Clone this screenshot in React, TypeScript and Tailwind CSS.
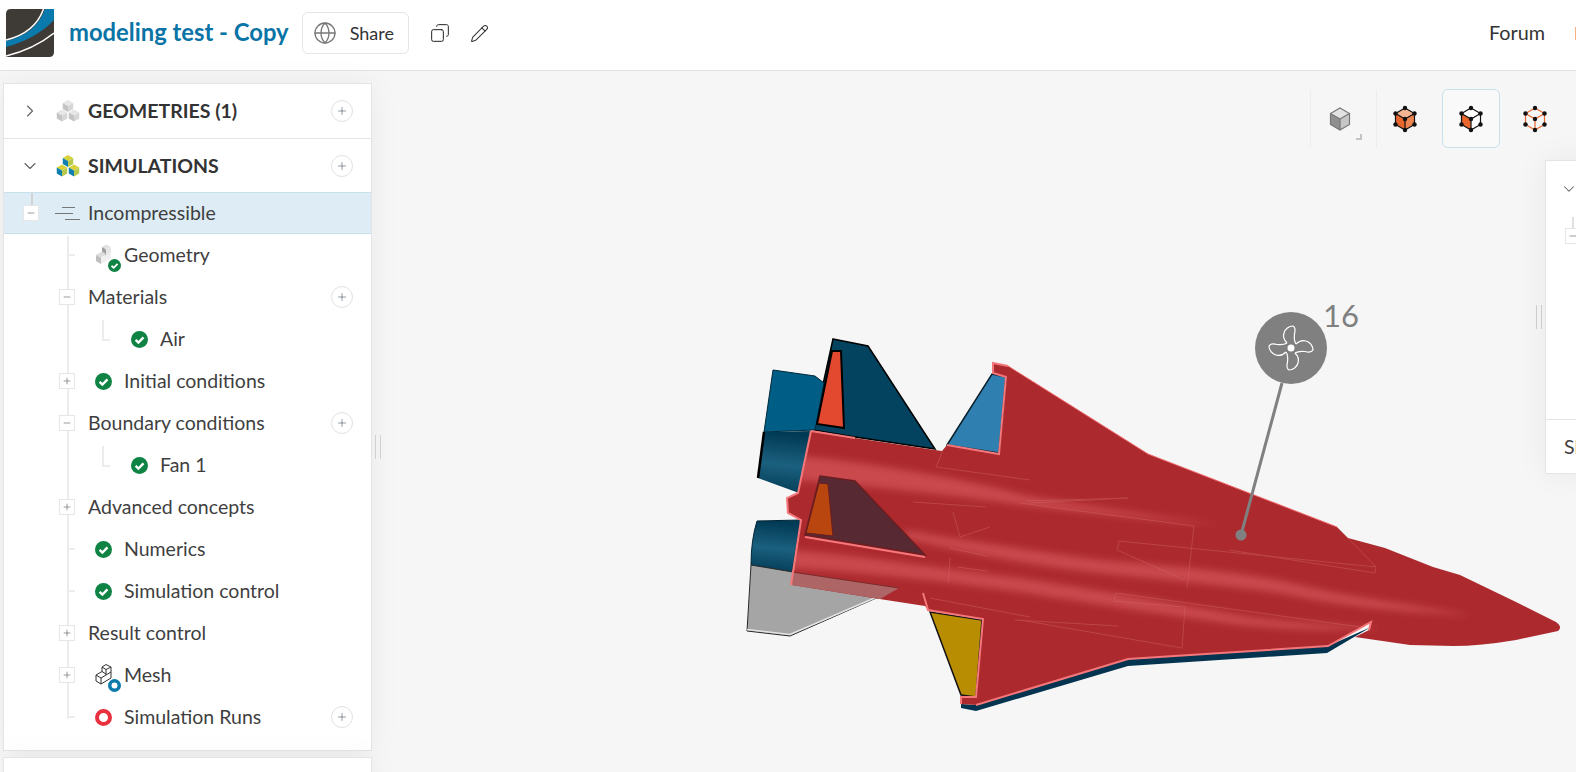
import { ChevronDown, ChevronRight, Copy, Globe, Pencil, Plus, Minus } from 'lucide-react'
import type { ReactNode } from 'react'

const BODY =
  'M811,431 L855,438 L935,450 L942,451 L947,445 L999,454 L1006,377 L993,373 L993,363 L1008,366 L1148,454 L1337,527 L1348,538 L1385,548 L1433,567 L1460,575 L1516,602 L1556,622 Q1563,627 1558,631 L1516,640 Q1480,646 1453,646 L1410,645 L1355,637 L1369,630 L1371,622 L1328,646 L1128,659 L976,705 L961,704 L961,697 L976,697 L983,619 L928,610 L925,606 L873,598 L792,585 L801,520 L788,513 L787,498 L798,493 Z'

const STREAKS = [
  'M795,455 C860,462 950,475 1023,495 C1080,505 1150,515 1220,525 C1150,520 1080,512 1023,505 C950,495 860,485 795,480 Z',
  'M905,530 C960,540 1030,550 1100,560 C1170,566 1250,572 1300,585 C1350,598 1420,605 1470,615 C1400,612 1340,606 1290,595 C1230,585 1160,580 1090,572 C1030,565 960,552 905,538 Z',
  'M790,550 C860,555 950,570 1020,578 C1100,590 1180,605 1250,617 C1290,622 1330,625 1380,628 C1320,632 1280,628 1240,625 C1170,615 1100,605 1020,592 C950,582 860,572 790,568 Z',
]

const PANEL_LINES = [
  'M1025,501 L1128,498 L1030,503',
  'M1020,503 L1194,526 L1187,588',
  'M1119,541 L1117,550 L1185,580',
  'M1119,541 L1376,567 L1375,573 L1229,550',
  'M1348,538 L1376,567',
  'M1116,593 L1114,601 L1185,607 L1182,648',
  'M1116,593 L1360,627',
  'M1015,620 L1118,626',
  'M1020,620 L1182,648',
  'M913,502 L986,507',
  'M953,512 L960,537 L990,527',
  'M950,548 L987,556',
  'M950,558 L948,583',
  'M957,567 L987,571',
  'M930,598 L1030,617',
  'M943,450 L936,467 L1030,480',
]

function Jet() {
  return (
    <svg className="absolute inset-0" width="1576" height="701" viewBox="0 71 1576 701" fill="none">
      <defs>
        <clipPath id="body-clip">
          <path d={BODY} />
        </clipPath>
        <filter id="soft" filterUnits="userSpaceOnUse" x="760" y="400" width="800" height="300">
          <feGaussianBlur stdDeviation="3.5" />
        </filter>
        <linearGradient id="engine-a" x1="0.1" y1="0" x2="0" y2="1">
          <stop offset="0" stopColor="#013a54" />
          <stop offset="0.5" stopColor="#1b607f" />
          <stop offset="1" stopColor="#013a54" />
        </linearGradient>
      </defs>

      <path d="M833,339 L868,346 L935,449 L855,437 L813,430 Z" fill="#03435f" stroke="#000" strokeWidth="1.5" />
      <path d="M773,370 L815,376 L824,383 L815,430 L764,432 Z" fill="#005d85" stroke="#02293b" strokeWidth="1" />
      <path d="M764,432 L811,431 L799,493 L758,478 Z" fill="url(#engine-a)" />
      <path d="M764,432 L758,478" stroke="#000" strokeWidth="2.5" />
      <path d="M832,351 L841,351 L844,428 L817,424 Z" fill="#e2492f" stroke="#000" strokeWidth="2" />

      <path d="M757,521 L801,520 L792,572 L751,565 Q751,540 757,521 Z" fill="url(#engine-a)" stroke="#012434" strokeWidth="1" />
      <path d="M751,565 L793,572 L899,588 L790,636 L747,631 Z" fill="#a5a5a5" stroke="#2a2a2a" strokeWidth="1" />
      <path d="M747,631 L790,636 L899,589" stroke="#e4e4e4" strokeWidth="1.5" transform="translate(0,-1.5)" />

      <path d="M961,704 L961,708 L976,711 L1128,666 L1327,653 L1371,627 L1328,646 L1128,659 L976,705 Z" fill="#04344f" />

      <path d={BODY} fill="#ac2a2e" />
      <g clipPath="url(#body-clip)">
        <g filter="url(#soft)" fill="#c9494e">
          {STREAKS.map((d) => (
            <path key={d} d={d} />
          ))}
        </g>
        <g stroke="#d56a6d" strokeWidth="1" opacity="0.4" fill="none">
          {PANEL_LINES.map((d) => (
            <path key={d} d={d} />
          ))}
        </g>
      </g>

      <path d="M992,374 L1006,377 L999,453 L947,445 Z" fill="#2f7fb0" stroke="#08202c" strokeWidth="1.5" />
      <path d="M930,612 L982,620 L976,697 L961,695 Z" fill="#b98d02" stroke="#111" strokeWidth="1.5" />

      <path d="M820,476 L855,481 L925,555 L805,535 Z" fill="#572a33" stroke="#6b1d20" strokeWidth="1.5" />
      <path d="M819,483 L828,484 L833,536 L806,533 Z" fill="#b8460e" stroke="#6b1d20" strokeWidth="1" />
      <path d="M792,572 L899,588 L880,599 L792,585 Z" fill="#ad6566" />
      <path d="M792,572 L899,588" stroke="#7a2a2a" strokeWidth="1" />

      <g stroke="#f4777b" fill="none" strokeWidth="2">
        <path d="M811,431 L855,438" />
        <path d="M811,431 L798,493 L787,498 L788,513 L801,520 L791,585" />
        <path d="M947,445 L999,454 L1006,377 L993,373 L993,363 L1008,366" />
        <path d="M805,537 L925,557" />
        <path d="M923,593 L928,610 L983,619 L976,697 L961,697 L961,704" />
        <path d="M976,705 L1128,659 L1328,646 L1371,622 L1369,630" />
      </g>
      <path d="M1008,366 L1148,454 L1337,527" stroke="#f0686c" strokeWidth="1" />

      <path d="M1282,383 L1241,535" stroke="#808080" strokeWidth="3" />
      <circle cx="1241" cy="535" r="5.5" fill="#808080" />
      <circle cx="1291" cy="348" r="36" fill="#808080" />
      <g transform="translate(1291,348)" stroke="#fff" strokeWidth="1.2" fill="none">
        {[0, 90, 180, 270].map((a) => (
          <path key={a} transform={`rotate(${a})`} d="M-4,-5 C-7,-8 -8,-12 -7,-15 C-6,-19 -2,-22 2,-22 C4,-21 4.5,-18 3.5,-14 C3,-10 3,-7 5,-4" />
        ))}
        <circle r="3.5" fill="#fff" stroke="none" />
      </g>
      <text x="1323" y="327" fontFamily="Lato, sans-serif" fontSize="31" fill="#808080">
        16
      </text>
    </svg>
  )
}

function Logo() {
  return (
    <svg width="48" height="48" viewBox="0 0 48 48" className="shrink-0">
      <path d="M5,0 H48 V43 Q48,48 43,48 H0 V5 Q0,0 5,0 Z" fill="#3e3a36" />
      <path d="M0,32 Q30,25 39,0 H48 V11 Q30,30 0,38 Z" fill="#0a7aad" />
      <path d="M0,31 Q29,24 37.5,0" stroke="#fff" strokeWidth="1.5" fill="none" />
      <path d="M0,47 Q28,40 48,24" stroke="#fff" strokeWidth="1.5" fill="none" />
    </svg>
  )
}

function Cube({ x, y, s, top, left, right }: { x: number; y: number; s: number; top: string; left: string; right: string }) {
  const w = s * 0.87
  const h = s * 0.5
  return (
    <g>
      <path d={`M${x},${y - s} L${x + w},${y - h} L${x},${y} L${x - w},${y - h} Z`} fill={top} />
      <path d={`M${x - w},${y - h} L${x},${y} L${x},${y + s} L${x - w},${y + h} Z`} fill={left} />
      <path d={`M${x + w},${y - h} L${x},${y} L${x},${y + s} L${x + w},${y + h} Z`} fill={right} />
    </g>
  )
}

function CubesIcon({ top, left, right }: { top: string; left: string; right: string }) {
  return (
    <svg width="24" height="24" viewBox="0 0 24 24" className="shrink-0">
      <Cube x={12} y={7} s={6} top={top} left={left} right={right} />
      <Cube x={6} y={16.5} s={6} top={top} left={left} right={right} />
      <Cube x={18} y={16.5} s={6} top={top} left={left} right={right} />
    </svg>
  )
}

function Check({ size = 17 }: { size?: number }) {
  return (
    <svg width={size} height={size} viewBox="0 0 17 17" className="shrink-0">
      <circle cx="8.5" cy="8.5" r="8.5" fill="#0e8344" />
      <path d="M4.6,8.8 L7.4,11.5 L12.5,6.3" stroke="#fff" strokeWidth="2.4" fill="none" />
    </svg>
  )
}

function Ring({ size, color, width }: { size: number; color: string; width: number }) {
  return (
    <svg width={size} height={size} viewBox={`0 0 ${size} ${size}`} className="shrink-0">
      <circle cx={size / 2} cy={size / 2} r={(size - width) / 2} stroke={color} strokeWidth={width} fill="#fff" />
    </svg>
  )
}

function GeometryIcon() {
  return (
    <div className="relative w-[29px] h-[28px] shrink-0">
      <svg width="18" height="22" viewBox="0 0 18 22" className="mt-[3px]">
        <path d="M7,3 L11,0.5 L16,3 L11,5.5 Z" fill="#e2e2e2" />
        <path d="M7,3 L11,5.5 L11,12 L7,9.5 Z" fill="#9e9e9e" />
        <path d="M11,5.5 L16,3 L16,14 L11,16 Z" fill="#e6e6e6" />
        <path d="M1,11 L7,7.5 L11,10 L6,14 Z" fill="#dcdcdc" />
        <path d="M1,11 L6,14 L6,20 L1,17 Z" fill="#bdbdbd" />
        <path d="M6,14 L16,8 L16,14 L6,20 Z" fill="#efefef" />
      </svg>
      <div className="absolute left-[13px] top-[18px] rounded-full bg-white">
        <Check size={13} />
      </div>
    </div>
  )
}

function MeshIcon() {
  return (
    <div className="relative w-[29px] h-[28px] shrink-0">
      <svg width="18" height="22" viewBox="0 0 18 22" fill="none" stroke="#333" strokeWidth="1" className="mt-[3px]">
        <path d="M7,3 L11,0.5 L16,3 L16,14 L6,20 L1,17 L1,11 L7,7.5 Z" />
        <path d="M7,3 L11,5.5 L16,3 M11,5.5 L11,11 M1,11 L6,14 L6,20 M6,14 L16,8 M7,7.5 L11,10" />
      </svg>
      <div className="absolute left-[13px] top-[18px]">
        <Ring size={13} color="#0a7aad" width={3.5} />
      </div>
    </div>
  )
}

function AddButton() {
  return (
    <div className="w-[22px] h-[22px] rounded-full border border-[#dfe2e6] flex items-center justify-center shrink-0 bg-white">
      <Plus size={12} strokeWidth={1.2} color="#4b5563" />
    </div>
  )
}

function Toggle({ open }: { open: boolean }) {
  return (
    <div className="w-4 h-4 border border-[#e6e6e6] bg-white flex items-center justify-center shrink-0 relative">
      {open ? <Minus size={10} strokeWidth={1.4} color="#555" /> : <Plus size={10} strokeWidth={1.4} color="#555" />}
    </div>
  )
}

interface RowProps {
  label: string
  icon?: ReactNode
  toggle?: 'open' | 'closed'
  add?: boolean
  tick?: boolean
  child?: boolean
}

function TreeRow({ label, icon, toggle, add, tick, child }: RowProps) {
  return (
    <div className={`relative flex items-center h-[42px] pr-[18px] ${child ? 'pl-[91px]' : 'pl-[55px]'}`}>
      {tick && <div className="absolute left-[63px] top-[20px] w-[8px] h-[2px] bg-[#ececec]" />}
      {child && <div className="absolute left-[98px] top-[2px] w-[8px] h-[21px] border-l-2 border-b-2 border-[#ececec]" />}
      <div className="w-[29px] flex justify-start shrink-0">{toggle && <Toggle open={toggle === 'open'} />}</div>
      {icon ? <div className="w-[29px] flex shrink-0 ml-[7px]">{icon}</div> : null}
      <span className="flex-1 text-[19.5px] text-[#3f3f3f]">{label}</span>
      {add && <AddButton />}
    </div>
  )
}

function ViewCube({ top, left, right, edge, dots }: { top: string; left: string; right: string; edge: string; dots?: boolean }) {
  const pts = [[0, -11], [9.5, -5.5], [9.5, 5.5], [0, 11], [-9.5, 5.5], [-9.5, -5.5], [0, 0]]
  return (
    <svg width="26" height="28" viewBox="-13 -14 26 28" className="shrink-0">
      <path d="M0,-11 L9.5,-5.5 L0,0 L-9.5,-5.5 Z" fill={top} />
      <path d="M-9.5,-5.5 L0,0 L0,11 L-9.5,5.5 Z" fill={left} />
      <path d="M9.5,-5.5 L0,0 L0,11 L9.5,5.5 Z" fill={right} />
      <path d="M0,-11 L9.5,-5.5 L9.5,5.5 L0,11 L-9.5,5.5 L-9.5,-5.5 Z M-9.5,-5.5 L0,0 L9.5,-5.5 M0,0 L0,11" stroke={edge} strokeWidth="1.2" fill="none" />
      {dots && pts.map(([x, y]) => <circle key={`${x}${y}`} cx={x} cy={y} r="2.2" fill="#111" />)}
    </svg>
  )
}

function Splitter({ className }: { className: string }) {
  return (
    <div className={`absolute flex gap-[4px] h-[24px] ${className}`}>
      <div className="w-px bg-[#d0d0d0]" />
      <div className="w-px bg-[#d0d0d0]" />
    </div>
  )
}

export default function App() {
  return (
    <div className="h-screen w-full overflow-hidden bg-[#f6f6f6] font-['Lato',sans-serif] flex flex-col">
      <header className="h-[71px] shrink-0 bg-white border-b border-[#e3e3e3] flex items-center pl-[6px] pb-[4px]">
        <Logo />
        <h1 className="ml-[15px] text-[23.8px] font-bold text-[#0a74a6] whitespace-nowrap">modeling test - Copy</h1>
        <button className="ml-[13px] h-[42px] w-[107px] border border-[#e5e5e5] rounded-md flex items-center pl-[10px] gap-[13px] text-[18px] text-[#333]">
          <Globe size={24} strokeWidth={1.3} color="#777" />
          Share
        </button>
        <Copy size={20} strokeWidth={1.2} color="#222" className="ml-[21px] -scale-x-100" />
        <Pencil size={19} strokeWidth={1.3} color="#333" className="ml-[20px]" />
        <span className="ml-auto text-[19.8px] text-[#333]">Forum</span>
        <div className="ml-[30px] w-px h-[13px] bg-[#f4b183]" />
      </header>

      <div className="relative flex-1">
        <Jet />

        {/* Left panel */}
        <div className="relative w-[369px] ml-[3px] pt-3 flex flex-col gap-[6px]">
          <div className="bg-white border border-[#e4e4e4] shadow-[0_0_30px_rgba(0,0,0,0.05)]">
            <div className="h-[55px] flex items-center pl-[16px] pr-[18px] border-b border-[#e4e4e4]">
              <ChevronRight size={20} strokeWidth={1.4} color="#666" />
              <div className="ml-[16px] mr-[8px]">
                <CubesIcon top="#e6e6e6" left="#c4c4c4" right="#d6d6d6" />
              </div>
              <span className="flex-1 text-[19.5px] font-bold text-[#333]">GEOMETRIES (1)</span>
              <AddButton />
            </div>
            <div className="h-[54px] flex items-center pl-[16px] pr-[18px] border-b border-[#c8e0ec]">
              <ChevronDown size={20} strokeWidth={1.4} color="#666" />
              <div className="ml-[16px] mr-[8px]">
                <CubesIcon top="#d8d23a" left="#0f7fb0" right="#b5c94c" />
              </div>
              <span className="flex-1 text-[19.5px] font-bold text-[#333]">SIMULATIONS</span>
              <AddButton />
            </div>
            <div className="relative h-[41px] flex items-center pl-[19px] bg-[#deedf5] border-b border-[#c8e0ec]">
              <div className="absolute left-[27px] top-0 w-[2px] h-[12px] bg-[#d3d3d3]" />
              <Toggle open />
              <svg width="28" height="16" viewBox="0 0 28 16" className="ml-[16px] mr-[5px]" stroke="#777" strokeWidth="1.2">
                <path d="M7,2.5 H20 M0,8.5 H18 M10,14.5 H25" />
              </svg>
              <span className="text-[19.5px] text-[#3f3f3f]">Incompressible</span>
            </div>

            <div className="relative pb-[12px]">
              <div className="absolute left-[63px] top-[2px] w-[2px] h-[483px] bg-[#ececec]" />
              <TreeRow label="Geometry" tick icon={<GeometryIcon />} />
              <TreeRow label="Materials" toggle="open" add />
              <TreeRow label="Air" child icon={<Check />} />
              <TreeRow label="Initial conditions" toggle="closed" icon={<Check />} />
              <TreeRow label="Boundary conditions" toggle="open" add />
              <TreeRow label="Fan 1" child icon={<Check />} />
              <TreeRow label="Advanced concepts" toggle="closed" />
              <TreeRow label="Numerics" tick icon={<Check />} />
              <TreeRow label="Simulation control" tick icon={<Check />} />
              <TreeRow label="Result control" toggle="closed" />
              <TreeRow label="Mesh" toggle="closed" icon={<MeshIcon />} />
              <TreeRow label="Simulation Runs" tick icon={<Ring size={17} color="#e8303f" width={4} />} add />
            </div>
          </div>
          <div className="h-[60px] bg-white border border-[#e4e4e4] shadow-[0_0_30px_rgba(0,0,0,0.05)]" />
        </div>

        <Splitter className="left-[375px] top-[364px]" />
        <Splitter className="left-[1536px] top-[234px]" />

        {/* View mode toolbar */}
        <div className="absolute left-[1310px] top-[18px] flex items-center h-[59px]">
          <div className="relative w-[67px] h-[58px] border-x border-[#ededed] flex items-center justify-center pr-[8px]">
            <ViewCube top="#e2e2e2" left="#8f8f8f" right="#c6c6c6" edge="#777" />
            <div className="absolute right-[14px] bottom-[8px] w-[6px] h-[6px] border-r-2 border-b-2 border-[#c4c4c4]" />
          </div>
          <div className="w-[65px] flex justify-center pr-[9px]">
            <ViewCube top="#f4b494" left="#e9672c" right="#ee8450" edge="#111" dots />
          </div>
          <div className="w-[58px] h-[59px] rounded-md border border-[#c8e0ec] bg-[#f9f9f9] flex items-center justify-center">
            <ViewCube top="#fff" left="#e9672c" right="#fff" edge="#111" dots />
          </div>
          <div className="w-[70px] flex justify-center">
            <ViewCube top="transparent" left="transparent" right="transparent" edge="#e9672c" dots />
          </div>
        </div>

        {/* Right panel, runs off the window */}
        <div className="absolute left-[1545px] top-[89px] w-[300px] h-[314px] bg-white border border-[#e4e4e4] shadow-[0_0_30px_rgba(0,0,0,0.06)]">
          <div className="h-[259px] border-b border-[#e4e4e4] relative">
            <ChevronDown size={18} strokeWidth={1.4} color="#666" className="absolute left-[14px] top-[19px]" />
            <div className="absolute left-[26px] top-[56px] w-[2px] h-[11px] bg-[#e0e0e0]" />
            <div className="absolute left-[19px] top-[67px]">
              <Toggle open />
            </div>
          </div>
          <div className="pl-[18px] pt-[12px] text-[19.5px] text-[#3f3f3f]">Sl</div>
        </div>
      </div>
    </div>
  )
}
